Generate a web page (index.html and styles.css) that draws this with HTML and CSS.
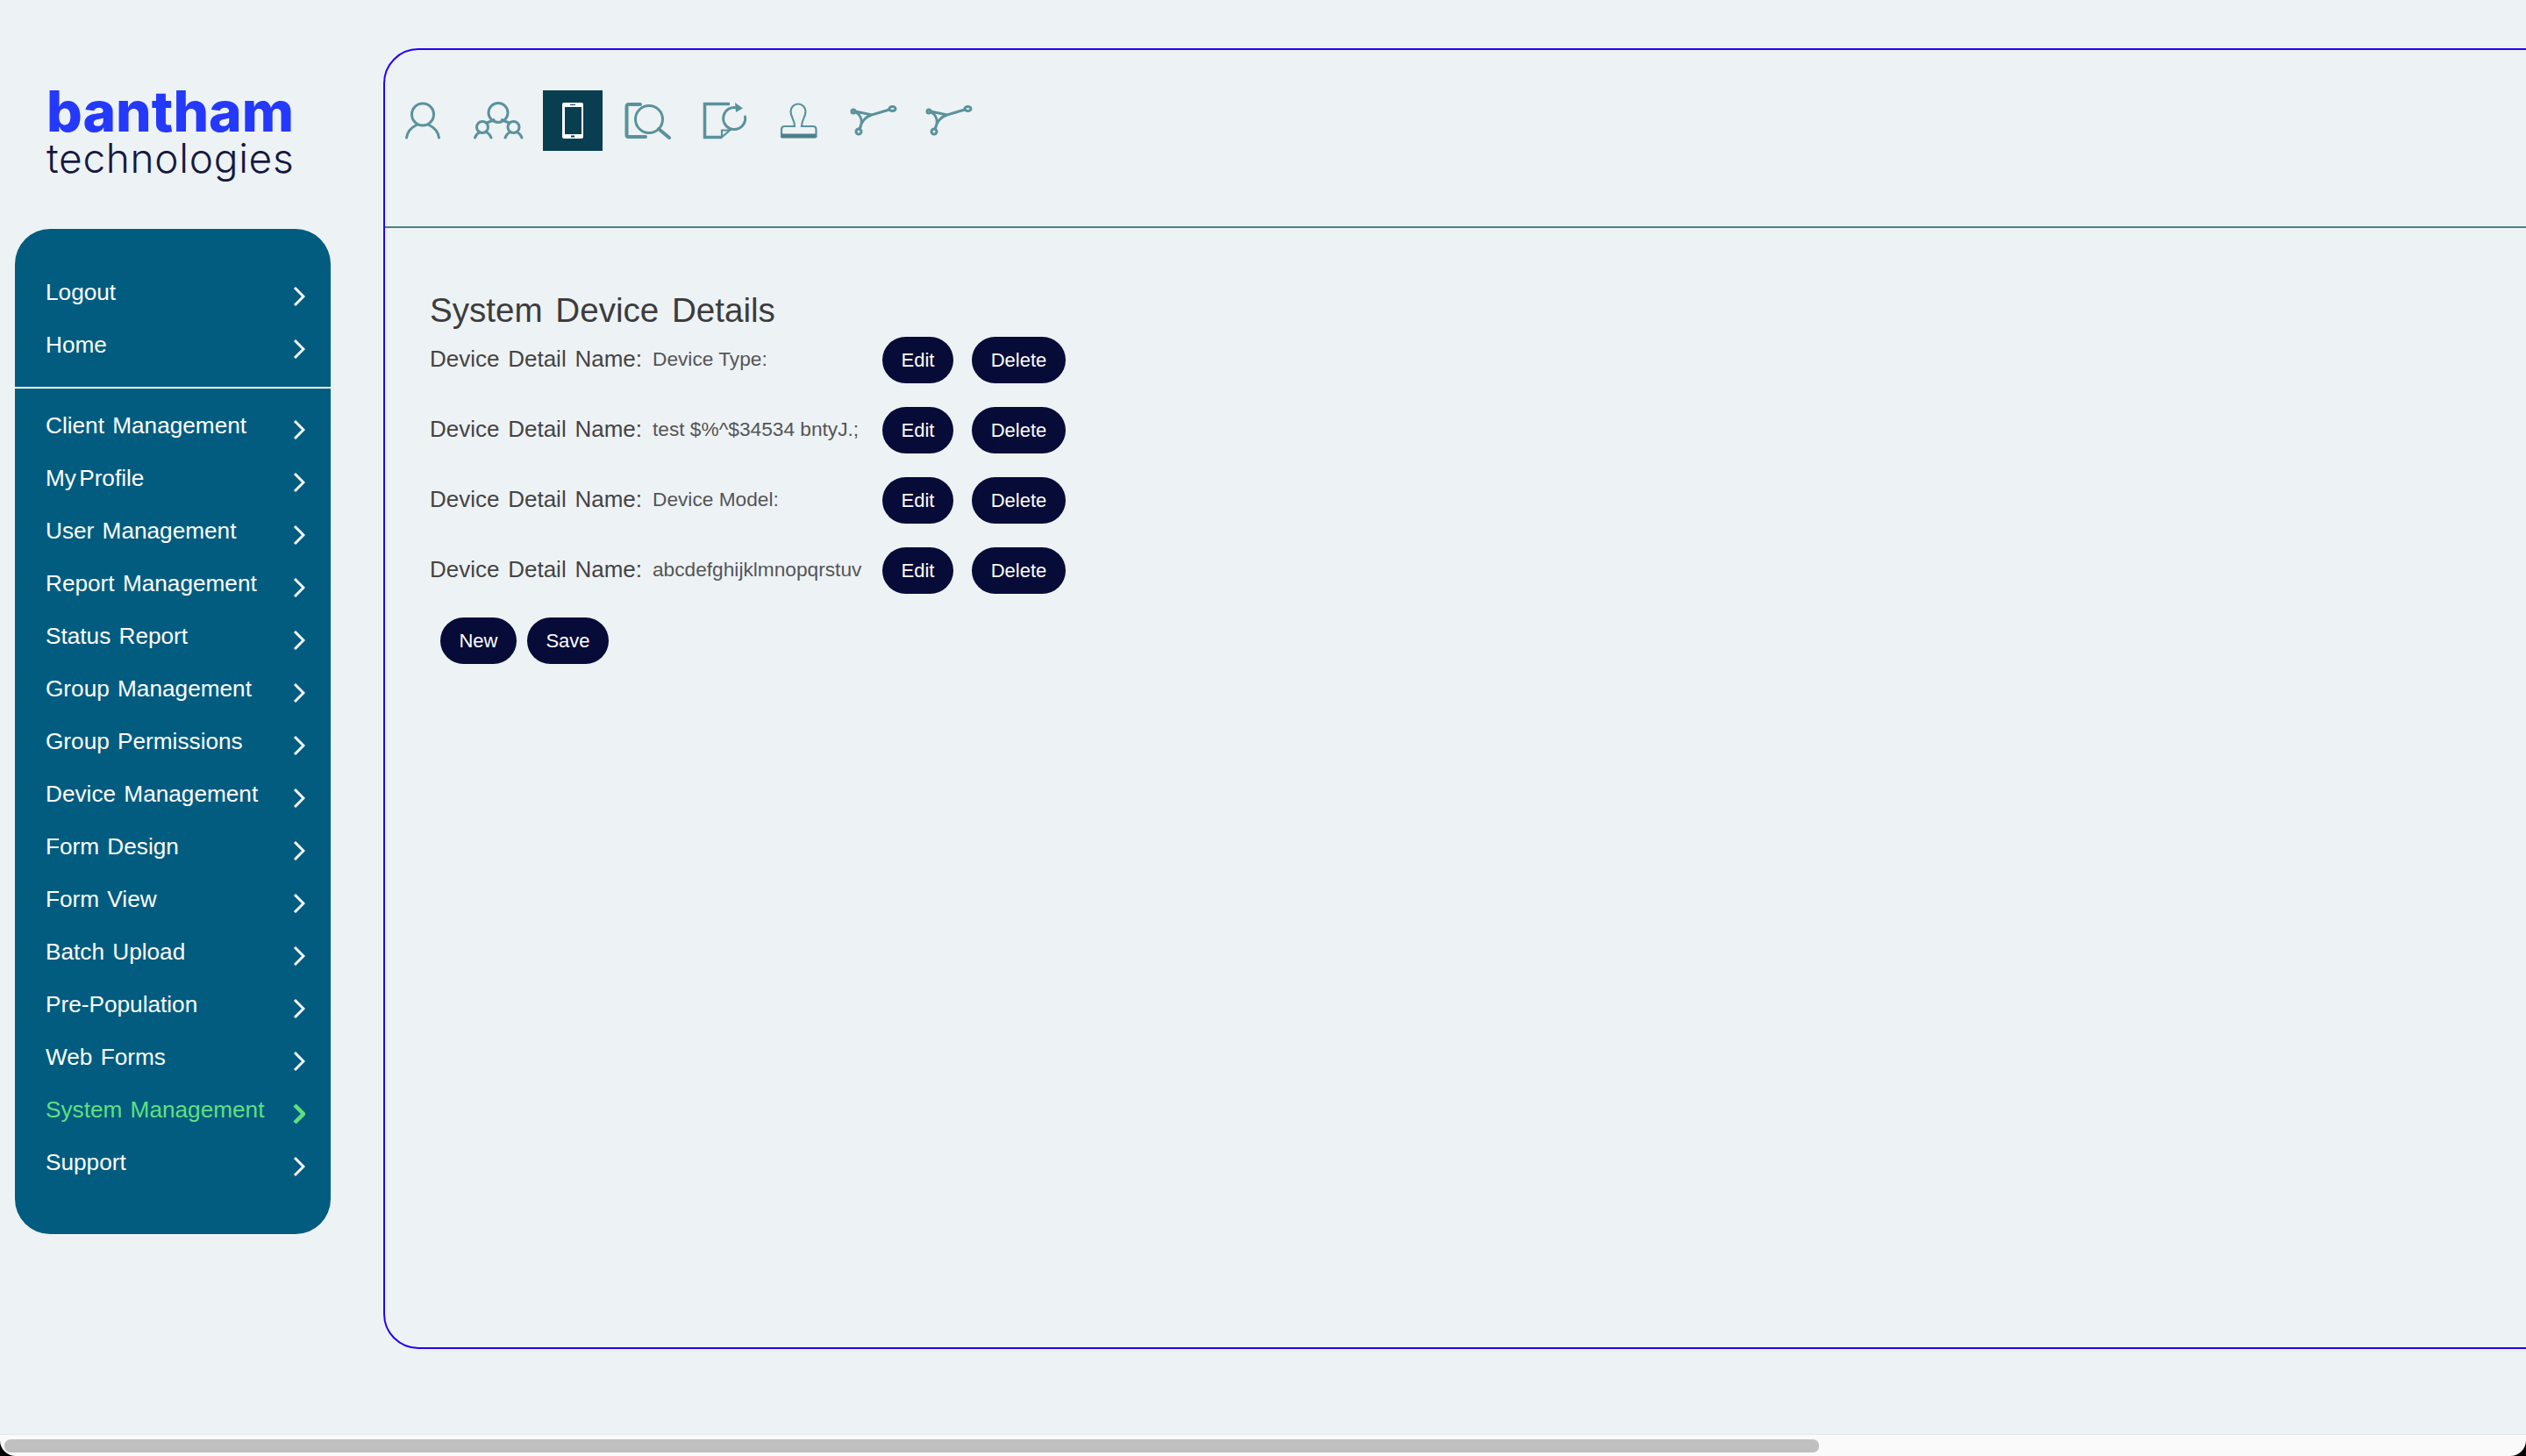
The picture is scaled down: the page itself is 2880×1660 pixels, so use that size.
FILE: index.html
```html
<!DOCTYPE html>
<html lang="en">
<head>
  <meta charset="UTF-8" />
  <title>System Device Details</title>
  <link rel="stylesheet" href="styles.css">
</head>
<body>
  <div class="page">
    <aside class="side">
      <div class="logo">
        <div class="logo-top">bantham</div>
        <div class="logo-bottom">technologies</div>
      </div>
      <nav class="menu">
        <ul class="menu-group menu-group-top">
          <li class="menu-item"><span>Logout</span><svg class="chev" viewBox="0 0 14 22"><path d="M2 1l10 10-10 10"/></svg></li>
          <li class="menu-item"><span>Home</span><svg class="chev" viewBox="0 0 14 22"><path d="M2 1l10 10-10 10"/></svg></li>
        </ul>
        <ul class="menu-group">
          <li class="menu-item"><span>Client Management</span><svg class="chev" viewBox="0 0 14 22"><path d="M2 1l10 10-10 10"/></svg></li>
          <li class="menu-item menu-item-tight"><span>My Profile</span><svg class="chev" viewBox="0 0 14 22"><path d="M2 1l10 10-10 10"/></svg></li>
          <li class="menu-item"><span>User Management</span><svg class="chev" viewBox="0 0 14 22"><path d="M2 1l10 10-10 10"/></svg></li>
          <li class="menu-item"><span>Report Management</span><svg class="chev" viewBox="0 0 14 22"><path d="M2 1l10 10-10 10"/></svg></li>
          <li class="menu-item"><span>Status Report</span><svg class="chev" viewBox="0 0 14 22"><path d="M2 1l10 10-10 10"/></svg></li>
          <li class="menu-item"><span>Group Management</span><svg class="chev" viewBox="0 0 14 22"><path d="M2 1l10 10-10 10"/></svg></li>
          <li class="menu-item"><span>Group Permissions</span><svg class="chev" viewBox="0 0 14 22"><path d="M2 1l10 10-10 10"/></svg></li>
          <li class="menu-item"><span>Device Management</span><svg class="chev" viewBox="0 0 14 22"><path d="M2 1l10 10-10 10"/></svg></li>
          <li class="menu-item"><span>Form Design</span><svg class="chev" viewBox="0 0 14 22"><path d="M2 1l10 10-10 10"/></svg></li>
          <li class="menu-item"><span>Form View</span><svg class="chev" viewBox="0 0 14 22"><path d="M2 1l10 10-10 10"/></svg></li>
          <li class="menu-item"><span>Batch Upload</span><svg class="chev" viewBox="0 0 14 22"><path d="M2 1l10 10-10 10"/></svg></li>
          <li class="menu-item"><span>Pre-Population</span><svg class="chev" viewBox="0 0 14 22"><path d="M2 1l10 10-10 10"/></svg></li>
          <li class="menu-item"><span>Web Forms</span><svg class="chev" viewBox="0 0 14 22"><path d="M2 1l10 10-10 10"/></svg></li>
          <li class="menu-item menu-item-active"><span>System Management</span><svg class="chev" viewBox="0 0 14 22"><path d="M2 1l10 10-10 10"/></svg></li>
          <li class="menu-item"><span>Support</span><svg class="chev" viewBox="0 0 14 22"><path d="M2 1l10 10-10 10"/></svg></li>
        </ul>
      </nav>
    </aside>

    <main class="panel">
      <div class="toolbar">
        <!-- person -->
        <a class="tool"><svg viewBox="0 0 68 68"><circle cx="34" cy="27.5" r="12.5"/><path d="M15.5 54c1-7 6-12 11.500-14.500M52.500 54c-1-7-6-12-11.500-14.500"/></svg></a>
        <!-- group -->
        <a class="tool"><svg viewBox="0 0 68 68"><circle cx="34" cy="25.500" r="11"/><circle cx="16" cy="42" r="6.500"/><circle cx="51.500" cy="42" r="6.500"/><path d="M21 37c3-1 6-2 8-3.500M46.500 37c-3-1-6-2-8-3.500M7.500 54c1-3 3-5 5-6M26 54c-1-3-3-5-5-6M42 54c1-3 3-5 5-6M61 54c-1-3-3-5-5-6"/></svg></a>
        <!-- device, active -->
        <a class="tool tool-active"><svg viewBox="0 0 68 68"><rect class="phone" x="22" y="14" width="24" height="41" rx="2"/><rect class="fill" x="25" y="19" width="19" height="31"/><rect class="fill" x="31" y="16" width="6" height="1"/><rect class="fill" x="32" y="51.500" width="4" height="2"/></svg></a>
        <!-- device search -->
        <a class="tool"><svg viewBox="0 0 68 68"><path class="thick" d="M25 16H12q-2.500 0-2.500 2.500V51q0 2 2 2H31"/><circle cx="35" cy="33" r="15.500"/><path class="thick" d="M46 44l12 10"/></svg></a>
        <!-- page refresh -->
        <a class="tool"><svg viewBox="0 0 68 68"><path class="mid" d="M41 15.500H12.500V53.500H32"/><path class="thin" d="M32 53.500V45.500H41L32 53.500"/><path d="M51 20.500a12.500 12.500 0 1 0 7.500 9.500"/><path class="solid" d="M47 14l9 6.500-8 4.500z"/></svg></a>
        <!-- stamp -->
        <a class="tool"><svg viewBox="0 0 68 68"><path class="thin" d="M30 41c0-8-4.500-10-4.500-17a8.500 8.500 0 0 1 17 0c0 7-4.500 9-4.500 17h13c2 0 3.500 1.500 3.500 3.500V53H15v-8.500c0-2 1.500-3.500 3.500-3.500z"/><path class="bar" d="M15 52h39"/></svg></a>
        <!-- bezier -->
        <a class="tool"><svg viewBox="0 0 68 68"><path d="M13 24l19 4 20-6M14 25c6 4 8 11 4 19M32 28c-7 2-12 8-14 16"/><ellipse cx="55.500" cy="21" rx="3.500" ry="2.500"/><circle cx="11" cy="24" r="2"/><circle cx="17" cy="47" r="3"/></svg></a>
        <a class="tool"><svg viewBox="0 0 68 68"><path d="M13 24l19 4 20-6M14 25c6 4 8 11 4 19M32 28c-7 2-12 8-14 16"/><ellipse cx="55.500" cy="21" rx="3.500" ry="2.500"/><circle cx="11" cy="24" r="2"/><circle cx="17" cy="47" r="3"/></svg></a>
      </div>

      <section class="details">
        <h1 class="title">System Device Details</h1>
        <div class="detail-row">
          <label class="detail-label">Device Detail Name:</label>
          <div class="detail-value">Device Type:</div>
          <button class="btn btn-edit">Edit</button>
          <button class="btn btn-delete">Delete</button>
        </div>
        <div class="detail-row">
          <label class="detail-label">Device Detail Name:</label>
          <div class="detail-value">test $%^$34534 bntyJ.;</div>
          <button class="btn btn-edit">Edit</button>
          <button class="btn btn-delete">Delete</button>
        </div>
        <div class="detail-row">
          <label class="detail-label">Device Detail Name:</label>
          <div class="detail-value">Device Model:</div>
          <button class="btn btn-edit">Edit</button>
          <button class="btn btn-delete">Delete</button>
        </div>
        <div class="detail-row">
          <label class="detail-label">Device Detail Name:</label>
          <div class="detail-value">abcdefghijklmnopqrstuv</div>
          <button class="btn btn-edit">Edit</button>
          <button class="btn btn-delete">Delete</button>
        </div>
        <div class="actions">
          <button class="btn btn-new">New</button>
          <button class="btn btn-save">Save</button>
        </div>
      </section>
    </main>
  </div>

  <div class="scrollbar"><div class="scrollbar-thumb"></div></div>
</body>
</html>
```

FILE: styles.css
```css
/* Reset & base */
* { box-sizing: border-box; margin: 0; padding: 0; }
html, body { height: 100%; overflow: hidden; }
body { background: #000; font-family: "Liberation Sans", Arial, sans-serif; color: #3c3c3c; }

.page { display: flex; height: 1635px; background: #edf2f5; overflow: hidden; }

/* Sidebar */
.side { flex: 0 0 437px; padding: 0 0 0 17px; }
.logo { width: 360px; height: 261px; padding: 98px 0 0 36px; }
.logo-top { font-family: "Inter", sans-serif; font-weight: 800; font-size: 64px; line-height: 58px; color: #2439fb; }
.logo-bottom { font-family: "Inter", sans-serif; font-weight: 300; font-size: 46px; line-height: 48px; color: #15193f; letter-spacing: 0.7px; }

.menu { width: 360px; height: 1146px; background: #015c80; border-radius: 40px; padding-top: 42px; }
.menu-group { list-style: none; }
.menu-group-top { height: 140px; border-bottom: 2px solid #fff; margin-bottom: 12px; }
.menu-item { display: flex; justify-content: space-between; align-items: center; height: 60px; padding: 0 29px 0 35px; font-size: 26.2px; color: #fff; }
.menu-item span { word-spacing: 2px; }
.menu-item-tight span { word-spacing: -4px; }
.chev { width: 14px; height: 22px; margin-top: 10px; fill: none; stroke: #f4f7f9; stroke-width: 3; }
.menu-item-active { color: #5fe07f; }
.menu-item-active .chev { stroke: #5fe07f; stroke-width: 4.5; }

/* Main panel */
.panel { flex: 0 0 2600px; height: 1483px; margin-top: 55px; border: 2px solid #2200f5; border-radius: 40px 0 0 40px; }
.toolbar { display: flex; gap: 17.7px; height: 203px; padding: 46px 0 0 9px; border-bottom: 2px solid #4d8089; }
.tool { display: block; width: 68px; height: 69px; }
.tool svg { display: block; width: 68px; height: 68px; fill: none; stroke: #5a929c; stroke-width: 3; stroke-linecap: round; }
.tool svg .thick { stroke-width: 4; }
.tool svg .mid { stroke-width: 3.5; stroke-linecap: butt; }
.tool svg .thin { stroke-width: 2.2; }
.tool svg .bar { stroke-width: 5; stroke-linecap: butt; stroke: #4d8089; }
.tool svg .solid { fill: #5a929c; stroke: none; }
.tool-active { background: #093d50; }
.tool-active svg .phone { fill: #fff; stroke: none; }
.tool-active svg .fill { fill: #093d50; stroke: none; }

/* Device details */
.details { padding: 73px 0 0 51px; }
.title { font-size: 38.6px; font-weight: 400; line-height: 42px; color: #3c3c3c; word-spacing: 4px; height: 51px; }
.detail-row { display: flex; align-items: center; height: 53px; margin-bottom: 27px; }
.detail-label { width: 254px; font-size: 26px; line-height: 50px; height: 53px; color: #444; word-spacing: 2.5px; white-space: nowrap; }
.detail-value { width: 239px; margin-right: 23px; font-size: 22.7px; line-height: 50px; height: 53px; color: #555; white-space: nowrap; }

.btn { height: 53px; border: none; border-radius: 27px; background: #060b38; color: #fff; font-family: inherit; font-size: 22px; cursor: pointer; }
.btn-edit { width: 81px; margin-right: 21px; }
.btn-delete { width: 107px; }
.actions { display: flex; gap: 12px; padding-left: 12px; }
.btn-new { width: 87px; }
.btn-save { width: 93px; }

/* Fake horizontal scrollbar, the page itself never scrolls */
.scrollbar { height: 25px; padding: 5px 0 0 5px; background: #fafafa; border-top: 1px solid #e6e9ea; border-radius: 0 0 18px 18px; }
.scrollbar-thumb { width: 2069px; height: 15px; background: #c0c0c0; border-radius: 7px; }
```
